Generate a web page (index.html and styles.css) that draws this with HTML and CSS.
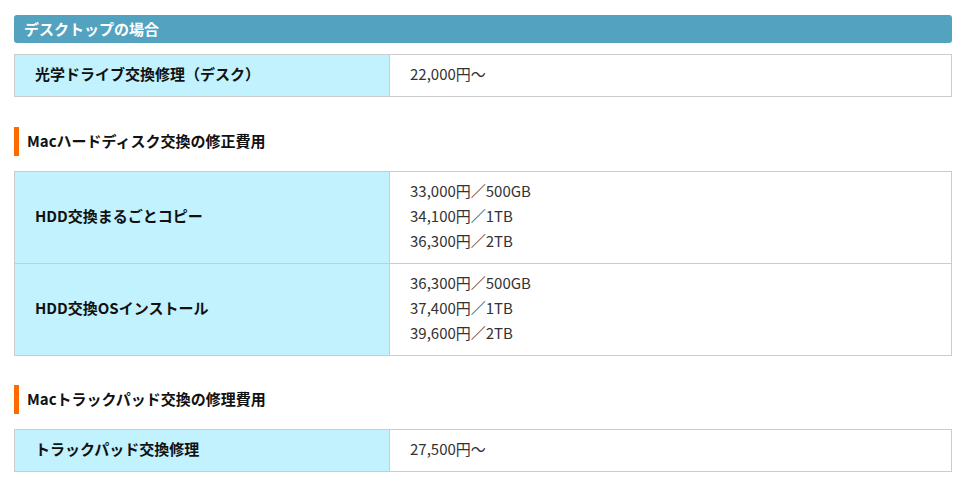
FILE: index.html
```html
<!DOCTYPE html>
<html lang="ja">
<head>
<meta charset="utf-8">
<link rel="stylesheet" href="styles.css">
</head>
<body>
<div class="page">
  <h3 class="box-title">デスクトップの場合</h3>
  <table class="price">
    <tr><th>光学ドライブ交換修理（デスク）</th><td>22,000円～</td></tr>
  </table>

  <h4 class="sub-title">Macハードディスク交換の修正費用</h4>
  <table class="price">
    <tr><th>HDD交換まるごとコピー</th><td>33,000円／500GB<br>34,100円／1TB<br>36,300円／2TB</td></tr>
    <tr><th>HDD交換OSインストール</th><td>36,300円／500GB<br>37,400円／1TB<br>39,600円／2TB</td></tr>
  </table>

  <h4 class="sub-title sub-title--tight">Macトラックパッド交換の修理費用</h4>
  <table class="price">
    <tr><th>トラックパッド交換修理</th><td>27,500円～</td></tr>
  </table>
</div>
</body>
</html>
```
FILE: styles.css
```css
html, body { margin: 0; padding: 0; background: #fff; }
body {
  font-family: "Noto Sans CJK JP", "Noto Sans", sans-serif;
  color: #222;
  font-size: 15px;
}
.page {
  width: 938px;
  padding: 15px 0 0 14px;
}
.box-title {
  margin: 0;
  height: 28px;
  line-height: 27px;
  background: #52a2c0;
  color: #fff;
  font-size: 15px;
  font-weight: bold;
  padding-left: 10px;
  border-radius: 3px;
}
.price {
  width: 100%;
  border-collapse: collapse;
  margin-top: 11px;
}
.price th, .price td {
  border: 1px solid #cccccc;
  padding: 6px 20px 10px;
  line-height: 25px;
  text-align: left;
  vertical-align: middle;
  font-size: 15px;
}
.price th {
  width: 334px;
  background: #c1f2fe;
  font-weight: bold;
  color: #111;
}
.price td {
  background: #fff;
  color: #333;
}
.sub-title {
  margin: 30px 0 15px;
  height: 29px;
  line-height: 27px;
  border-left: 5px solid #ff6a00;
  padding-left: 8px;
  font-size: 15px;
  font-weight: bold;
  color: #111;
}
.sub-title--tight { margin-top: 29px; }
.sub-title + .price { margin-top: 0; }
```
